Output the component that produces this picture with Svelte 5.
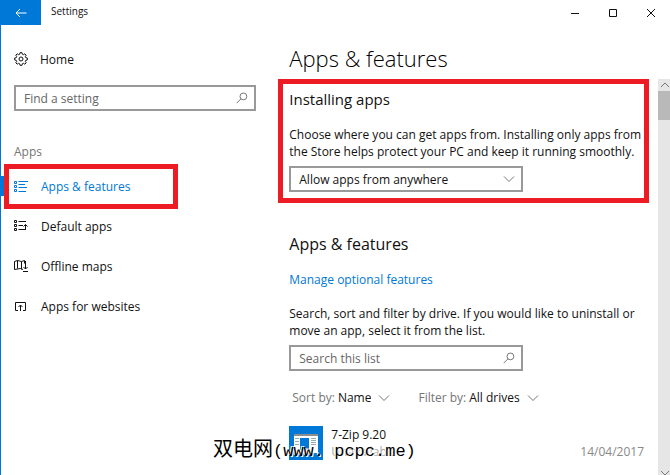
<script>
  const navItems = [
    { id: 'features', label: 'Apps & features', active: true },
    { id: 'defaults', label: 'Default apps' },
    { id: 'maps', label: 'Offline maps' },
    { id: 'websites', label: 'Apps for websites' },
  ];

  let source = $state('anywhere');
  let sort = $state('name');
  let drive = $state('all');
</script>

{#snippet chevron()}
  <svg class="chevron" width="12" height="8" viewBox="0 0 12 8" aria-hidden="true">
    <path d="M1 1.5 6 6.5 11 1.5" />
  </svg>
{/snippet}

{#snippet magnifier()}
  <svg class="magnifier" width="12" height="12" viewBox="0 0 12 12" aria-hidden="true">
    <circle cx="7.4" cy="4.4" r="3.4" />
    <path d="M4.9 6.9 .7 11.1" />
  </svg>
{/snippet}

{#snippet navIcon(id)}
  <svg width="14" height="14" viewBox="0 0 14 14" aria-hidden="true">
    {#if id === 'features'}
      <path d="M.5 1.5h2v2h-2zM.5 5.5h2v2h-2zM.5 9.5h2v2h-2zM4.5 1.5H14M4.5 4.5H11M4.5 7.5H13M4.5 11.5H12" />
    {:else if id === 'defaults'}
      <path d="M.5 1.5h2v2h-2zM.5 5.5h2v2h-2zM.5 9.5h2v2h-2zM4.5 2.5H12M4.5 6.5H9M4.5 10.5H11M11.5 11V5.5M9.5 7.5l2-2 2 2" />
    {:else if id === 'maps'}
      <path d="M9 10.5 6.5 9.5.5 10.5V2.5L3.5 1.5l4 1 3-1v3M3.5 1.5v8M7.5 2.5v8M11.5 2v8M9.5 8l2 2 2-2M9 12.5h5" />
    {:else}
      <path d="M4 11.5H1.5v-8h10v8H9M6.5 12V6M4.5 8l2-2 2 2" />
    {/if}
  </svg>
{/snippet}

<div class="window">
  <header class="titlebar">
    <button class="back" aria-label="Back">
      <svg width="12" height="10" viewBox="0 0 12 10" aria-hidden="true">
        <path d="M11.5 5H1M5 1 1 5l4 4" />
      </svg>
    </button>
    <span class="window-title">Settings</span>
    <div class="window-buttons">
      <button aria-label="Minimize">
        <svg width="10" height="10" viewBox="0 0 10 10"><path d="M1 5.5h8" /></svg>
      </button>
      <button aria-label="Maximize">
        <svg width="10" height="10" viewBox="0 0 10 10"><path d="M1.5 1.5h7v7h-7z" /></svg>
      </button>
      <button aria-label="Close">
        <svg width="10" height="10" viewBox="0 0 10 10"><path d="m1 1 8 8M9 1 1 9" /></svg>
      </button>
    </div>
  </header>

  <div class="body">
    <aside class="sidebar">
      <a class="home" href="#home">
        <svg width="14" height="14" viewBox="0 0 14 14" aria-hidden="true">
          <circle cx="7" cy="7" r="2" />
          <path
            d="M6 .7h2l.4 1.6 1 .4 1.4-.9 1.4 1.4-.9 1.4.4 1 1.6.4v2l-1.6.4-.4 1 .9 1.4-1.4 1.4-1.4-.9-1 .4-.4 1.6H6l-.4-1.6-1-.4-1.4.9-1.4-1.4.9-1.4-.4-1L.7 8V6l1.6-.4.4-1-.9-1.4 1.4-1.4 1.4.9 1-.4z"
          />
        </svg>
        Home
      </a>
      <div class="search-box">
        <input type="text" placeholder="Find a setting" aria-label="Find a setting" />
        {@render magnifier()}
      </div>
      <h2 class="group-title">Apps</h2>
      <nav>
        {#each navItems as item (item.id)}
          <a class="nav-item" class:active={item.active} href={`#${item.id}`}>
            {@render navIcon(item.id)}
            {item.label}
          </a>
        {/each}
      </nav>
    </aside>

    <main class="content">
      <h1>Apps &amp; features</h1>
      <div class="scroll-area">
        <div class="page">
          <section class="installing">
            <h2>Installing apps</h2>
            <p>
              Choose where you can get apps from. Installing only apps from<br />
              the Store helps protect your PC and keep it running smoothly.
            </p>
            <div class="select-box">
              <select bind:value={source} aria-label="Installing apps">
                <option value="anywhere">Allow apps from anywhere</option>
              </select>
              {@render chevron()}
            </div>
          </section>

          <section class="features">
            <h2>Apps &amp; features</h2>
            <a class="link" href="#optional">Manage optional features</a>
            <p>
              Search, sort and filter by drive. If you would like to uninstall or<br />
              move an app, select it from the list.
            </p>
            <div class="search-box list-search">
              <input type="text" placeholder="Search this list" aria-label="Search this list" />
              {@render magnifier()}
            </div>
            <div class="filters">
              <label>
                Sort by:
                <select bind:value={sort}>
                  <option value="name">Name</option>
                </select>
                {@render chevron()}
              </label>
              <label>
                Filter by:
                <select bind:value={drive}>
                  <option value="all">All drives</option>
                </select>
                {@render chevron()}
              </label>
            </div>
            <div class="app">
              <svg class="app-icon" width="34" height="34" viewBox="0 0 34 34" aria-hidden="true">
                <rect width="34" height="34" fill="#0078d7" />
                <rect x="5" y="8" width="24" height="19" fill="#fff" />
                <rect x="5" y="8" width="24" height="2" fill="#8d8d8d" />
                <rect x="11" y="12" width="9" height="12" fill="#0078d7" />
                <path d="M6 12.5h4M6 15.5h4M6 18.5h4M22 12.5h5M22 14.5h5M22 16.5h5M22 18.5h5" stroke="#9aa" />
              </svg>
              <div class="app-text">
                <span>7-Zip 9.20</span>
                <span class="muted">Unavailable</span>
              </div>
              <time class="muted" datetime="2017-04-14">14/04/2017</time>
            </div>
          </section>
        </div>
        <div class="scrollbar">
          <svg width="12" height="12" viewBox="0 0 12 12"><path d="m3 8 4-4 4 4" /></svg>
          <div class="thumb"></div>
          <svg width="12" height="12" viewBox="0 0 12 12"><path d="m3 8 4 4 4-4" /></svg>
        </div>
      </div>
    </main>
  </div>

  <div class="watermark">双电网<span>(www. pcpc.me)</span></div>
</div>

<style>
  :global(body) {
    margin: 0;
    background: #fff;
  }

  .window {
    position: relative;
    display: flex;
    flex-direction: column;
    height: 100vh;
    box-sizing: border-box;
    border-left: 1px solid #0078d7;
    overflow: hidden;
    color: #111;
    font: 12px/17px 'Open Sans', 'Noto Sans', sans-serif;
  }

  a {
    color: inherit;
    text-decoration: none;
  }

  button,
  input,
  select {
    margin: 0;
    padding: 0;
    border: 0;
    background: none;
    color: inherit;
    font: inherit;
    outline: none;
  }

  svg {
    flex: none;
    fill: none;
    stroke: currentColor;
  }

  h1,
  h2,
  p {
    margin: 0;
    font-weight: 400;
  }

  .titlebar {
    display: flex;
    flex: none;
    height: 25px;
  }

  .back {
    display: flex;
    align-items: center;
    justify-content: center;
    width: 40px;
    background: #0078d7;
    color: #fff;
  }

  .window-title {
    flex: 1;
    padding: 3px 10px;
    font-size: 10px;
  }

  .window-buttons {
    display: flex;
  }

  .window-buttons button {
    display: flex;
    align-items: center;
    justify-content: center;
    width: 38px;
  }

  .body {
    display: flex;
    flex: 1;
    min-height: 0;
  }

  .sidebar {
    width: 41%;
    padding: 24px 0 0 13px;
    box-sizing: border-box;
  }

  .home {
    display: flex;
    align-items: center;
    gap: 12px;
    height: 20px;
  }

  .search-box,
  .select-box {
    display: flex;
    align-items: center;
    box-sizing: border-box;
    height: 26px;
    padding: 0 6px 0 8px;
    border: 2px solid #999;
  }

  .sidebar .search-box {
    width: 242px;
    margin-top: 16px;
  }

  input,
  .select-box select {
    flex: 1;
    min-width: 0;
  }

  input::placeholder {
    color: #666;
    opacity: 1;
  }

  select {
    appearance: none;
    field-sizing: content;
  }

  .magnifier,
  .chevron {
    color: #777;
  }

  .group-title {
    margin-top: 32px;
    color: #767676;
    font-size: 12px;
  }

  nav {
    margin: 4px 0 0 -13px;
  }

  .nav-item {
    display: flex;
    align-items: center;
    box-sizing: border-box;
    gap: 13px;
    height: 40px;
    padding-left: 13px;
  }

  .nav-item.active {
    position: relative;
    width: 174px;
    height: 45px;
    margin: 0 0 -3px 3px;
    padding: 0 0 0 5px;
    border: 5px solid #ed1c24;
    color: #0078d7;
  }

  .nav-item.active::before {
    content: '';
    position: absolute;
    top: 7px;
    left: -8px;
    width: 3px;
    height: 20px;
    background: #0078d7;
  }

  .content {
    display: flex;
    flex: 1;
    flex-direction: column;
    min-width: 0;
  }

  h1 {
    padding: 17px 0 5px 14px;
    color: #000;
    font-size: 22px;
    font-weight: 300;
    line-height: 32px;
  }

  .scroll-area {
    display: flex;
    flex: 1;
    min-height: 0;
  }

  .page {
    flex: 1;
    min-width: 0;
    overflow: hidden;
    padding: 0 9px 0 3px;
  }

  .installing {
    padding: 5px 5px 6px 6px;
    border: 5px solid #ed1c24;
    white-space: nowrap;
  }

  section h2 {
    font-size: 15px;
    line-height: 20px;
  }

  .installing p {
    margin: 17px 0 6px;
  }

  .select-box,
  .list-search {
    width: 234px;
  }

  .features {
    padding: 31px 5px 0 11px;
    white-space: nowrap;
  }

  .features h2 {
    font-size: 16px;
  }

  .link {
    display: block;
    margin: 17px 0;
    color: #0078d7;
  }

  .list-search {
    margin-top: 6px;
  }

  .filters {
    display: flex;
    gap: 28px;
    margin: 18px 0 20px 3px;
    color: #767676;
  }

  .filters label {
    display: flex;
    align-items: center;
    gap: 3px;
  }

  .filters select {
    margin-right: 4px;
    color: #111;
  }

  .app {
    display: flex;
    gap: 8px;
  }

  .app-icon {
    stroke: none;
  }

  .app-text {
    display: flex;
    flex: 1;
    flex-direction: column;
  }

  .muted {
    color: #888;
  }

  .app-text .muted {
    color: #aaa;
  }

  time {
    align-self: flex-end;
  }

  .scrollbar {
    display: flex;
    flex-direction: column;
    width: 12px;
    background: #e6e6e6;
    color: #777;
  }

  .thumb {
    height: 29px;
    margin-bottom: auto;
    background: #b9b9b9;
  }

  .watermark {
    position: absolute;
    left: 212px;
    bottom: 11px;
    color: #000;
    font: 20px/24px 'Noto Sans CJK SC', sans-serif;
    white-space: pre;
    text-shadow: 1px 1px #fff, -1px -1px #fff;
  }

  .watermark span {
    font-family: 'Liberation Mono', monospace;
    font-size: 17px;
  }
</style>
